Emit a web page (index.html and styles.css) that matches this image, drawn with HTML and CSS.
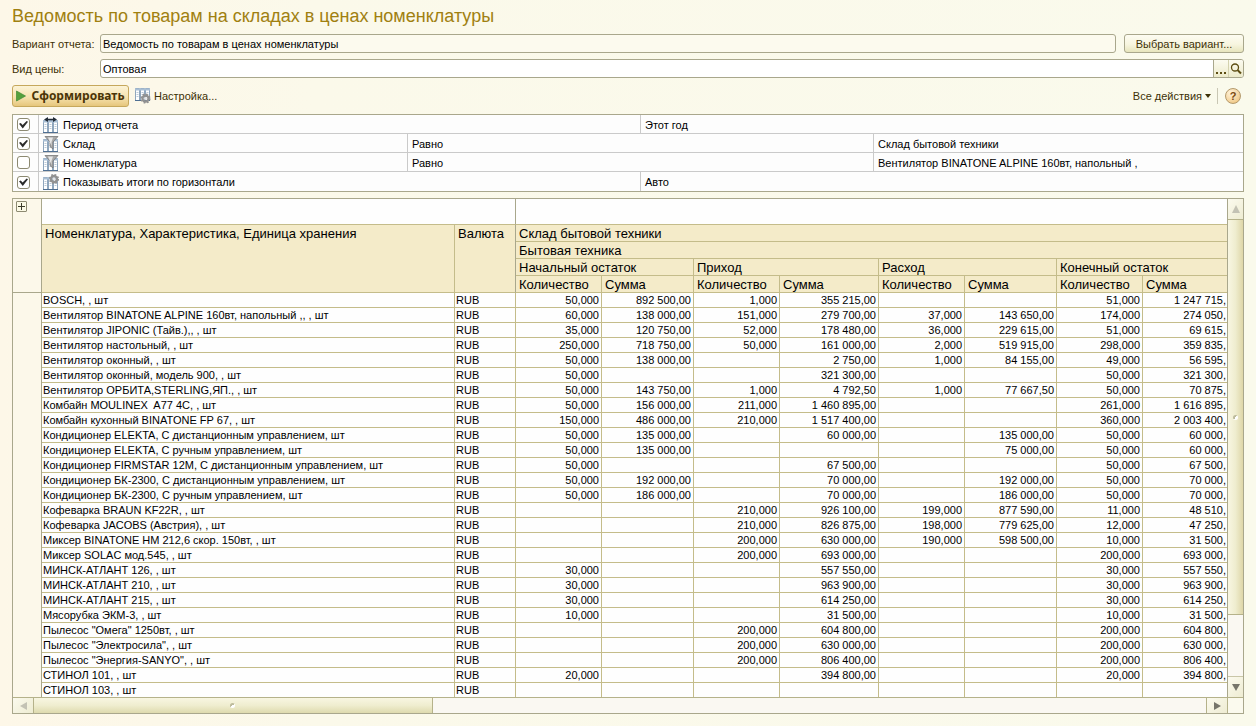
FILE: index.html
```
<!DOCTYPE html>
<html lang="ru">
<head>
<meta charset="utf-8">
<title>Ведомость по товарам на складах в ценах номенклатуры</title>
<link rel="stylesheet" href="styles.css">
</head>
<body>
<svg class="defs" width="0" height="0" aria-hidden="true">
  <defs>
    <g id="grid">
      <path d="M.5 3.5h4v12h-4zM5.500 3.500h4v12h-4zM10.500 3.500h4v12h-4z" fill="#fff" stroke="#8fa6bd"/>
      <path d="M0 4.500h15" stroke="#a9bfd4" stroke-width="2"/>
      <path d="M1.500 7.500h2M1.500 9.500h2M1.500 11.500h2M6.500 7.500h2M6.500 9.500h2M6.500 11.500h2M11.500 7.500h2M11.500 9.500h2M11.500 11.500h2" stroke="#bccbd9"/>
      <path d="M0 15.500h15" stroke="#4f6f92"/>
    </g>
    <g id="gear">
      <circle r="3" fill="none" stroke="#929292" stroke-width="2.400"/>
      <circle r="4.300" fill="none" stroke="#929292" stroke-width="1.600" stroke-dasharray="1.700 1.680"/>
      <circle r="1.400" fill="#e4e4e4"/>
    </g>
    <symbol id="i-period" viewBox="0 0 16 16">
      <use href="#grid"/>
      <path d="M3 2.500h9" stroke="#222b36" stroke-width="1.500"/>
      <path d="M5 0v5L1 2.500zM10 0v5l4-2.500z" fill="#222b36"/>
    </symbol>
    <symbol id="i-filter" viewBox="0 0 16 16">
      <use href="#grid"/>
      <path d="M2 .5h13L10 6v7l-3-2.500V6z" fill="#a9a9a9" stroke="#777" stroke-width=".8"/>
      <path d="M5 1.500h5L8.500 6v4z" fill="#e6e6e6"/>
    </symbol>
    <symbol id="i-totals" viewBox="0 0 16 16">
      <use href="#grid"/><use href="#gear" x="11" y="5"/>
    </symbol>
    <symbol id="i-setup" viewBox="0 0 16 16">
      <g transform="translate(0 -3)"><use href="#grid"/></g><use href="#gear" x="10.500" y="10.500"/>
    </symbol>
  </defs>
</svg>

<main class="page">
  <h1 class="title">Ведомость по товарам на складах в ценах номенклатуры</h1>

  <form class="params">
    <label class="params-label" for="variant">Вариант отчета:</label>
    <div class="params-line">
      <input class="field field-readonly" id="variant" type="text" value="Ведомость по товарам в ценах номенклатуры" readonly>
      <button class="btn btn-variant" type="button">Выбрать вариант...</button>
    </div>
    <label class="params-label" for="price">Вид цены:</label>
    <div class="combo">
      <input class="combo-input" id="price" type="text" value="Оптовая">
      <button class="combo-btn combo-dots" type="button" aria-label="Выбрать"><svg width="12" height="12"><path d="M1 9h2v2H1zM5 9h2v2H5zM9 9h2v2H9z" fill="#5d4d12"/></svg></button>
      <button class="combo-btn" type="button" aria-label="Открыть"><svg width="12" height="12" viewBox="0 0 12 12"><circle cx="5" cy="4.500" r="3.500" fill="none" stroke="#5d4d12" stroke-width="1.300"/><path d="M7.500 7l3.500 3.500" stroke="#5d4d12" stroke-width="2"/></svg></button>
    </div>
  </form>

  <div class="toolbar">
    <button class="run" type="button"><svg width="10" height="12" viewBox="0 0 10 12"><path d="M.5 1l9 5-9 5z" fill="#55a03c" stroke="#3d8a34" stroke-width=".7"/></svg>Сформировать</button>
    <button class="link-btn" type="button"><svg width="16" height="16"><use href="#i-setup"/></svg>Настройка...</button>
    <button class="link-btn actions" type="button">Все действия<svg width="6" height="4"><path d="M0 0h6L3 4z" fill="#3d3106"/></svg></button>
    <span class="separator"></span>
    <button class="help" type="button" aria-label="Справка">?</button>
  </div>

  <table class="settings">
    <colgroup><col class="s-check"><col class="s-side"><col class="s-mid"><col class="s-mid"><col class="s-side"></colgroup>
    <tbody>
      <tr><td><input class="check" type="checkbox" id="c1" checked></td><td colspan="2"><label class="param" for="c1"><svg width="16" height="16"><use href="#i-period"/></svg>Период отчета</label></td><td colspan="2">Этот год</td></tr>
      <tr><td><input class="check" type="checkbox" id="c2" checked></td><td><label class="param" for="c2"><svg width="16" height="16"><use href="#i-filter"/></svg>Склад</label></td><td colspan="2">Равно</td><td>Склад бытовой техники</td></tr>
      <tr><td><input class="check" type="checkbox" id="c3"></td><td><label class="param" for="c3"><svg width="16" height="16"><use href="#i-filter"/></svg>Номенклатура</label></td><td colspan="2">Равно</td><td>Вентилятор BINATONE ALPINE 160вт, напольный ,</td></tr>
      <tr><td><input class="check" type="checkbox" id="c4" checked></td><td colspan="2"><label class="param" for="c4"><svg width="16" height="16"><use href="#i-totals"/></svg>Показывать итоги по горизонтали</label></td><td colspan="2">Авто</td></tr>
    </tbody>
  </table>

  <section class="sheet">
    <div class="sheet-view">
      <table class="report">
        <colgroup><col class="w-gutter"><col><col class="w-cur"><col class="w-qty"><col class="w-sum"><col class="w-qty"><col class="w-in"><col class="w-qty"><col class="w-sum"><col class="w-qty"><col class="w-last"></colgroup>
        <thead>
          <tr class="blank"><td class="gutter" rowspan="5"><button class="expand" type="button" aria-label="Развернуть"><svg width="9" height="9"><path d="M1 4.500h7M4.500 1v7" stroke="#3b3a2a"/></svg></button></td><td class="freeze" colspan="2"></td><td colspan="8"></td></tr>
          <tr><th rowspan="4">Номенклатура, Характеристика, Единица хранения</th><th class="freeze" rowspan="4">Валюта</th><th class="edge" colspan="8">Склад бытовой техники</th></tr>
          <tr><th class="edge" colspan="8">Бытовая техника</th></tr>
          <tr><th colspan="2">Начальный остаток</th><th colspan="2">Приход</th><th colspan="2">Расход</th><th class="edge" colspan="2">Конечный остаток</th></tr>
          <tr><th>Количество</th><th>Сумма</th><th>Количество</th><th>Сумма</th><th>Количество</th><th>Сумма</th><th>Количество</th><th class="edge">Сумма</th></tr>
        </thead>
        <tbody>
          <tr><td class="gutter" rowspan="27"></td><td class="name">BOSCH, , шт</td><td class="cur">RUB</td><td>50,000</td><td>892 500,00</td><td>1,000</td><td>355 215,00</td><td></td><td></td><td>51,000</td><td>1 247 715,</td></tr>
          <tr><td class="name">Вентилятор BINATONE ALPINE 160вт, напольный ,, , шт</td><td class="cur">RUB</td><td>60,000</td><td>138 000,00</td><td>151,000</td><td>279 700,00</td><td>37,000</td><td>143 650,00</td><td>174,000</td><td>274 050,</td></tr>
          <tr><td class="name">Вентилятор JIPONIC (Тайв.),, , шт</td><td class="cur">RUB</td><td>35,000</td><td>120 750,00</td><td>52,000</td><td>178 480,00</td><td>36,000</td><td>229 615,00</td><td>51,000</td><td>69 615,</td></tr>
          <tr><td class="name">Вентилятор настольный, , шт</td><td class="cur">RUB</td><td>250,000</td><td>718 750,00</td><td>50,000</td><td>161 000,00</td><td>2,000</td><td>519 915,00</td><td>298,000</td><td>359 835,</td></tr>
          <tr><td class="name">Вентилятор оконный, , шт</td><td class="cur">RUB</td><td>50,000</td><td>138 000,00</td><td></td><td>2 750,00</td><td>1,000</td><td>84 155,00</td><td>49,000</td><td>56 595,</td></tr>
          <tr><td class="name">Вентилятор оконный, модель 900, , шт</td><td class="cur">RUB</td><td>50,000</td><td></td><td></td><td>321 300,00</td><td></td><td></td><td>50,000</td><td>321 300,</td></tr>
          <tr><td class="name">Вентилятор ОРБИТА,STERLING,ЯП., , шт</td><td class="cur">RUB</td><td>50,000</td><td>143 750,00</td><td>1,000</td><td>4 792,50</td><td>1,000</td><td>77 667,50</td><td>50,000</td><td>70 875,</td></tr>
          <tr><td class="name">Комбайн MOULINEX&nbsp; A77 4C, , шт</td><td class="cur">RUB</td><td>50,000</td><td>156 000,00</td><td>211,000</td><td>1 460 895,00</td><td></td><td></td><td>261,000</td><td>1 616 895,</td></tr>
          <tr><td class="name">Комбайн кухонный BINATONE FP 67, , шт</td><td class="cur">RUB</td><td>150,000</td><td>486 000,00</td><td>210,000</td><td>1 517 400,00</td><td></td><td></td><td>360,000</td><td>2 003 400,</td></tr>
          <tr><td class="name">Кондиционер ELEKTA, С дистанционным управлением, шт</td><td class="cur">RUB</td><td>50,000</td><td>135 000,00</td><td></td><td>60 000,00</td><td></td><td>135 000,00</td><td>50,000</td><td>60 000,</td></tr>
          <tr><td class="name">Кондиционер ELEKTA, С ручным управлением, шт</td><td class="cur">RUB</td><td>50,000</td><td>135 000,00</td><td></td><td></td><td></td><td>75 000,00</td><td>50,000</td><td>60 000,</td></tr>
          <tr><td class="name">Кондиционер FIRMSTAR 12M, С дистанционным управлением, шт</td><td class="cur">RUB</td><td>50,000</td><td></td><td></td><td>67 500,00</td><td></td><td></td><td>50,000</td><td>67 500,</td></tr>
          <tr><td class="name">Кондиционер БК-2300, С дистанционным управлением, шт</td><td class="cur">RUB</td><td>50,000</td><td>192 000,00</td><td></td><td>70 000,00</td><td></td><td>192 000,00</td><td>50,000</td><td>70 000,</td></tr>
          <tr><td class="name">Кондиционер БК-2300, С ручным управлением, шт</td><td class="cur">RUB</td><td>50,000</td><td>186 000,00</td><td></td><td>70 000,00</td><td></td><td>186 000,00</td><td>50,000</td><td>70 000,</td></tr>
          <tr><td class="name">Кофеварка BRAUN KF22R, , шт</td><td class="cur">RUB</td><td></td><td></td><td>210,000</td><td>926 100,00</td><td>199,000</td><td>877 590,00</td><td>11,000</td><td>48 510,</td></tr>
          <tr><td class="name">Кофеварка JACOBS (Австрия), , шт</td><td class="cur">RUB</td><td></td><td></td><td>210,000</td><td>826 875,00</td><td>198,000</td><td>779 625,00</td><td>12,000</td><td>47 250,</td></tr>
          <tr><td class="name">Миксер BINATONE HM 212,6 скор. 150вт, , шт</td><td class="cur">RUB</td><td></td><td></td><td>200,000</td><td>630 000,00</td><td>190,000</td><td>598 500,00</td><td>10,000</td><td>31 500,</td></tr>
          <tr><td class="name">Миксер SOLAC мод.545, , шт</td><td class="cur">RUB</td><td></td><td></td><td>200,000</td><td>693 000,00</td><td></td><td></td><td>200,000</td><td>693 000,</td></tr>
          <tr><td class="name">МИНСК-АТЛАНТ 126, , шт</td><td class="cur">RUB</td><td>30,000</td><td></td><td></td><td>557 550,00</td><td></td><td></td><td>30,000</td><td>557 550,</td></tr>
          <tr><td class="name">МИНСК-АТЛАНТ 210, , шт</td><td class="cur">RUB</td><td>30,000</td><td></td><td></td><td>963 900,00</td><td></td><td></td><td>30,000</td><td>963 900,</td></tr>
          <tr><td class="name">МИНСК-АТЛАНТ 215, , шт</td><td class="cur">RUB</td><td>30,000</td><td></td><td></td><td>614 250,00</td><td></td><td></td><td>30,000</td><td>614 250,</td></tr>
          <tr><td class="name">Мясорубка ЭКМ-3, , шт</td><td class="cur">RUB</td><td>10,000</td><td></td><td></td><td>31 500,00</td><td></td><td></td><td>10,000</td><td>31 500,</td></tr>
          <tr><td class="name">Пылесос "Омега" 1250вт, , шт</td><td class="cur">RUB</td><td></td><td></td><td>200,000</td><td>604 800,00</td><td></td><td></td><td>200,000</td><td>604 800,</td></tr>
          <tr><td class="name">Пылесос "Электросила", , шт</td><td class="cur">RUB</td><td></td><td></td><td>200,000</td><td>630 000,00</td><td></td><td></td><td>200,000</td><td>630 000,</td></tr>
          <tr><td class="name">Пылесос "Энергия-SANYO", , шт</td><td class="cur">RUB</td><td></td><td></td><td>200,000</td><td>806 400,00</td><td></td><td></td><td>200,000</td><td>806 400,</td></tr>
          <tr><td class="name">СТИНОЛ 101, , шт</td><td class="cur">RUB</td><td>20,000</td><td></td><td></td><td>394 800,00</td><td></td><td></td><td>20,000</td><td>394 800,</td></tr>
          <tr><td class="name">СТИНОЛ 103, , шт</td><td class="cur">RUB</td><td></td><td></td><td></td><td></td><td></td><td></td><td></td><td></td></tr>
        </tbody>
      </table>
    </div>
    <div class="vbar">
      <button class="arrow" type="button" aria-label="Вверх"><svg width="8" height="8"><path d="M4 0l4 8H0z" fill="#c3c2b4"/></svg></button>
      <div class="vthumb"><span class="grip"></span></div>
      <div class="vtrack"></div>
      <button class="arrow" type="button" aria-label="Вниз"><svg width="8" height="7"><path d="M0 0h8L4 7z" fill="#76756a"/></svg></button>
    </div>
    <div class="hbar">
      <button class="arrow" type="button" aria-label="Влево"><svg width="7" height="8"><path d="M7 0v8L0 4z" fill="#c3c2b4"/></svg></button>
      <div class="hthumb"><span class="grip"></span></div>
      <div class="htrack"></div>
      <button class="arrow" type="button" aria-label="Вправо"><svg width="7" height="8"><path d="M0 0v8l7-4z" fill="#76756a"/></svg></button>
    </div>
    <div class="corner"></div>
  </section>
</main>
</body>
</html>
```

FILE: styles.css
```
* { box-sizing: border-box; }

body {
  margin: 0;
  min-height: 100vh;
  background: linear-gradient(to right, #fdf7e8, #fbf9ea 25%, #fafaec);
  color: #3d3106;
  font: 11px/14px "Liberation Sans", Arial, sans-serif;
}

svg { display: block; flex: none; }
.defs { position: absolute; }

button, input { font: inherit; color: inherit; margin: 0; }
button { padding: 0; border: 0; background: none; cursor: pointer; }

.page { padding: 6px 12px 12px; }

.title {
  margin: 0 0 8px;
  color: #a08010;
  font: 400 18px/20px "Liberation Sans", Arial, sans-serif;
}

/* Report parameters */
.params {
  display: grid;
  grid-template-columns: 82px 1fr;
  gap: 6px;
  align-items: center;
}
.params-label { white-space: nowrap; }
.params-line { display: flex; gap: 8px; }
.field, .combo {
  height: 19px;
  border: 1px solid #a9a78c;
  border-radius: 3px;
}
.field { flex: 1; min-width: 0; padding: 0 2px; background: #fcfaee; color: #000; }
.btn {
  height: 19px;
  border: 1px solid #a9a78c;
  border-radius: 3px;
  background: linear-gradient(#fdfcf2, #f7f5df 55%, #e7e5bd);
}
.btn-variant { width: 120px; }
.combo { display: flex; overflow: hidden; background: #fff; }
.combo-input { flex: 1; min-width: 0; padding: 0 2px; border: 0; background: none; color: #000; }
.combo-btn {
  display: grid;
  place-items: center;
  width: 15px;
  border-left: 1px solid #d3d1ae;
  background: linear-gradient(#fcfbf0, #edebcb);
}
.combo-dots { border-color: #a9a78c; }

/* Command bar */
.toolbar {
  display: flex;
  align-items: center;
  gap: 6px;
  height: 22px;
  margin: 7px 0;
}
.run {
  display: flex;
  align-items: center;
  justify-content: center;
  gap: 5px;
  width: 117px;
  height: 22px;
  border: 1px solid #c6a85c;
  border-radius: 3px;
  background: linear-gradient(#fcf3d6, #f6e3b0 55%, #e6c67c);
  color: #4a3508;
  font: 700 12px/14px "Noto Sans", "Open Sans", sans-serif;
}
.link-btn { display: flex; align-items: center; gap: 3px; }
.actions { margin-left: auto; }
.separator { width: 1px; height: 16px; margin-right: 1px; background: #c9c7b4; }
.help {
  width: 16px;
  height: 16px;
  margin-right: 3px;
  border: 1px solid #b59a6c;
  border-radius: 50%;
  background: radial-gradient(circle at 35% 30%, #fff3dc, #f3cf92 70%, #e3ae62);
  color: #7a4a10;
  font-weight: 700;
}

/* Quick settings */
.settings {
  width: 100%;
  table-layout: fixed;
  border: 1px solid #a9a78c;
  border-spacing: 0;
  background: #fdfdfd;
  color: #000;
}
.s-check { width: 26px; }
.s-side { width: 30%; }
.settings td {
  height: 19px;
  padding: 1px 4px 0;
  border-right: 1px solid #cacaca;
  border-bottom: 1px solid #cacaca;
  white-space: nowrap;
  overflow: hidden;
}
.settings td:last-child { border-right: 0; }
.settings tr:last-child td { border-bottom: 0; }
.param { display: flex; align-items: center; gap: 4px; }
.check {
  appearance: none;
  display: grid;
  place-items: center;
  width: 13px;
  height: 13px;
  border: 1px solid #8d8a72;
  border-radius: 3px;
  background: #fff;
}
.check:checked::before {
  content: "";
  width: 9px;
  height: 8px;
  background: #2c2c2c;
  clip-path: polygon(0 40%, 20% 30%, 40% 55%, 85% 5%, 100% 15%, 42% 100%);
}

/* Spreadsheet */
.sheet {
  display: grid;
  grid-template-columns: 1fr 16px;
  grid-template-rows: auto 16px;
  margin-top: 6px;
  border: 1px solid #a9a78c;
}
.sheet-view { overflow: hidden; background: #fefefe; }
.report {
  width: 100%;
  table-layout: fixed;
  border-spacing: 0;
  color: #000;
  line-height: 14px;
}
.w-gutter { width: 29px; }
.w-cur { width: 61px; }
.w-qty { width: 86px; }
.w-sum { width: 92px; }
.w-in { width: 99px; }
.w-last { width: 84px; }
.report td, .report th {
  border-right: 1px solid #c4bc8a;
  border-bottom: 1px solid #c4bc8a;
  white-space: nowrap;
  overflow: hidden;
}
.report td { height: 15px; padding: 0 2px; text-align: right; }
.report td:last-child, .report .edge { border-right: 0; }
.report td:last-child { padding-right: 1px; }
.report th {
  height: 17px;
  padding: 1px 3px 0;
  background: #f4ebc9;
  font-size: 13px;
  font-weight: 400;
  line-height: 15px;
  text-align: left;
  vertical-align: top;
}
.report .blank td { height: 26px; }
.report .name, .report .cur { padding: 0 1px; text-align: left; }
.report .freeze { border-right-color: #a9a78c; }
.report .gutter {
  padding: 2px 3px;
  border-right: 1px solid #a9a78c;
  border-bottom-color: #a9a78c;
  background: #fcf8ea;
  vertical-align: top;
}
.report tbody .gutter, .report tbody tr:last-child td { height: 14px; border-bottom: 0; }
.expand {
  display: grid;
  place-items: center;
  width: 11px;
  height: 11px;
  border: 1px solid #8d8a72;
  border-radius: 1px;
  background: #fbfae6;
}

/* Scrollbars */
.vbar, .hbar { display: flex; background: #faf8f2; }
.vbar { flex-direction: column; border-left: 1px solid #a9a78c; }
.hbar { border-top: 1px solid #b5b28a; }
.arrow { display: grid; place-items: center; flex: none; background: linear-gradient(135deg, #fbfaee, #eeecd2); }
.vbar .arrow { height: 20px; }
.hbar .arrow { width: 20px; }
.vthumb, .hthumb { display: grid; place-items: center; border: solid #b5b28a; }
.vthumb { flex: 397; border-width: 1px 0; background: linear-gradient(to right, #f8f6e2, #efedcf 50%, #ded6a8); }
.hthumb { flex: 399; border-width: 0 1px; background: linear-gradient(#f8f6e2, #efedcf 50%, #dedaae); }
.vtrack { flex: 61; border-bottom: 1px solid #c9c6a8; }
.htrack { flex: 775; border-right: 1px solid #b5b28a; }
.grip { width: 5px; height: 5px; border-radius: 50%; background: linear-gradient(135deg, #bdbb9c 50%, #fff 50%); }
.corner { border: solid #b5b28a; border-width: 1px 0 0 1px; background: #fbfaee; }
```
